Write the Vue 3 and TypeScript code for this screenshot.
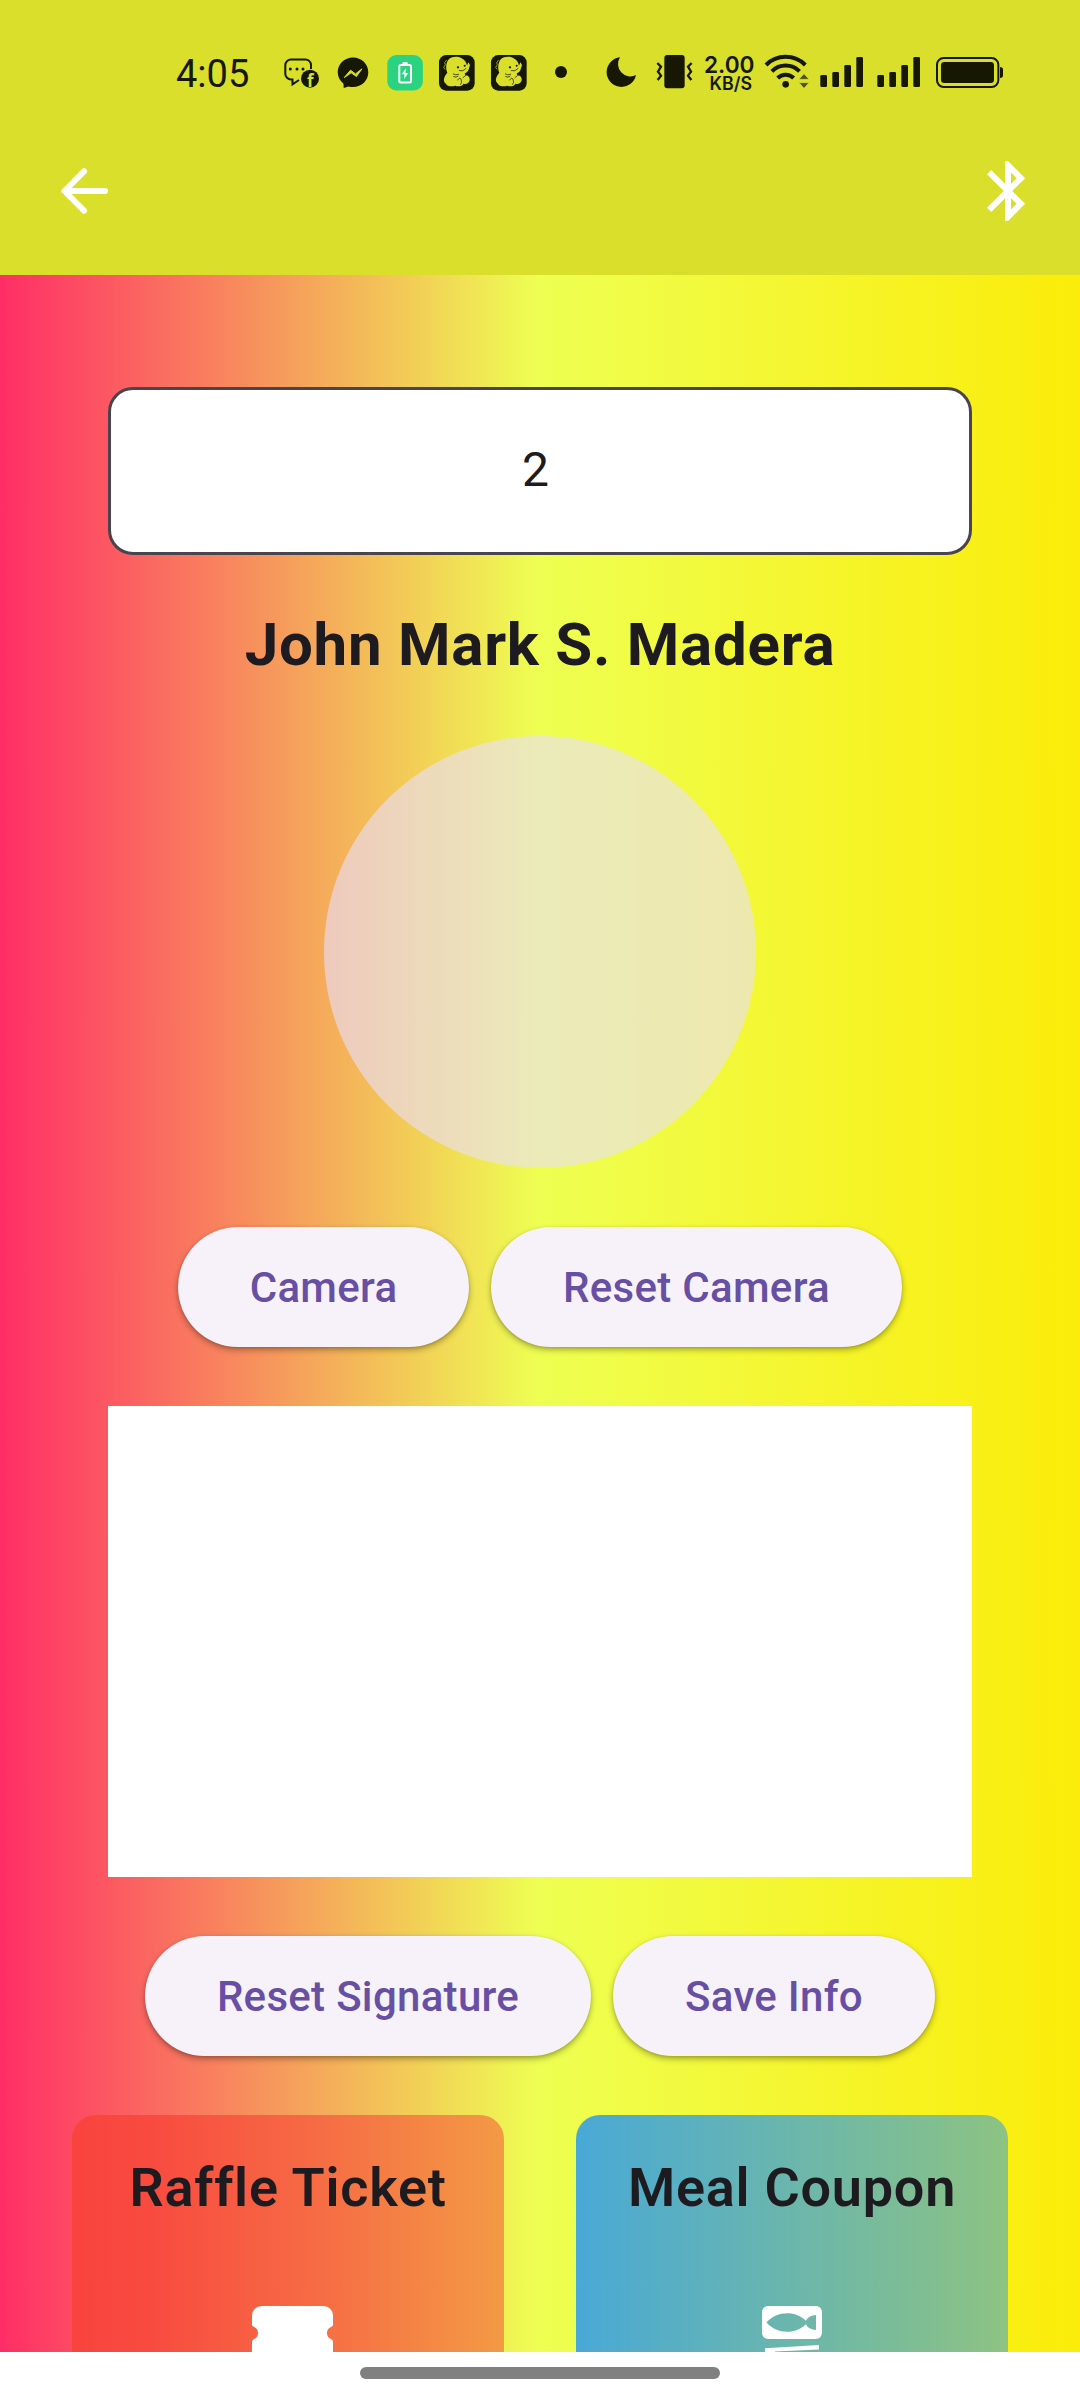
<script setup lang="ts">
import { ref } from 'vue'

interface Card {
  title: string
  kind: 'raffle' | 'meal'
}

const ticketNo = ref<string>('2')
const fullName = 'John Mark S. Madera'
const cards: Card[] = [
  { title: 'Raffle Ticket', kind: 'raffle' },
  { title: 'Meal Coupon', kind: 'meal' },
]
const dinoOffsets: number[] = [0, 156]
const signalOffsets: number[] = [0, 171]
</script>

<template>
  <div class="screen">
    <header class="top">
      <div class="status">
        <span class="clock">4:05</span>
        <svg class="notifications" width="300" height="50" viewBox="280 48 300 50">
          <!-- chat -->
          <path d="M291 59.500h14.500a5.500 5.500 0 0 1 5.500 5.500v4M299 80l-6.500 4.300V79.500H291a5.700 5.700 0 0 1-5.700-5.700V65.200a5.700 5.700 0 0 1 5.700-5.700" fill="none" stroke="#161804" stroke-width="2" />
          <circle cx="290.300" cy="69" r="1.500" /><circle cx="297" cy="69" r="1.500" /><circle cx="303" cy="69" r="1.500" />
          <circle cx="310" cy="78.700" r="9" />
          <text x="307" y="87" class="fb">f</text>
          <!-- messenger -->
          <path d="M353 57.500c8.700 0 15.300 6.400 15.300 14.800S361.700 87 353 87c-1.600 0-3.100-.2-4.500-.6L343.700 88l-.2-4.300c-3.500-2.800-5.800-6.700-5.800-11.400 0-8.400 6.600-14.800 15.300-14.800z" />
          <path d="M344.300 77.500l6.200-7.300 5 3.700 6.400-5-5.500 7.600-5.200-3.700z" fill="#d9df2b" stroke="#d9df2b" stroke-width="1" stroke-linejoin="round" />
          <!-- charging app -->
          <rect x="387.300" y="55" width="35.600" height="35.500" rx="9" fill="#2bd380" />
          <rect x="399.300" y="65" width="11.700" height="17.500" rx="1.500" fill="none" stroke="#fff" stroke-width="2" />
          <rect x="402.500" y="62" width="5.200" height="3" rx="1" fill="#fff" />
          <path d="M406 68.300l-4.400 6h3l-.6 4.700 4.400-6h-3z" fill="#fff" />
          <!-- dinosaur apps -->
          <g v-for="dx in dinoOffsets" :key="dx" :transform="`translate(${370 + dx / 3} 40) scale(.33333)`">
            <rect x="207" y="45" width="107" height="107" rx="22" />
            <path d="M232 98C226 86 228 66 237 57C246 49 263 48 274 54C284 59 290 68 291 77L295 67L300 75L295 91C291 98 287 99 284 101L287 107C295 105 300 113 299 121C297 130 288 134 280 131C277 139 264 141 256 137C244 141 231 139 228 131C222 128 220 120 223 113C225 106 229 102 232 98Z" fill="#d9df2b" />
            <g fill="none" stroke="#161804" stroke-width="2.200" stroke-linecap="round">
              <path d="M268 92Q279 96 288 86" />
              <path d="M250 102Q256 107 266 103M251 110Q258 114 264 109M263 120Q271 108 274 121Q276 128 272 133M279 113L286 107" />
            </g>
            <circle cx="264" cy="82" r="3.500" /><circle cx="284" cy="77" r="3" />
            <path d="M230 60l-6 8 2 6-5 8 4 6" fill="none" stroke="#d9df2b" stroke-width="2" />
          </g>
          <circle cx="561" cy="72" r="6" />
        </svg>
        <svg class="system" width="420" height="50" viewBox="600 48 420 50">
          <g transform="translate(590 40) scale(.33333)">
            <path d="M90 52A44.500 44.500 0 1 0 138 105A37 37 0 0 1 90 52z" />
            <rect x="223" y="45" width="61" height="100" rx="9" />
            <g fill="none" stroke="#161804" stroke-width="7">
              <path d="M202 69L213 80L204 95L213 107L203 120" />
              <path d="M305 69L294 80L303 95L294 107L304 120" />
            </g>
            <circle cx="587" cy="133" r="10" />
            <g fill="none" stroke="#161804" stroke-width="12">
              <path d="M528 75A83.500 83.500 0 0 1 646 75" />
              <path d="M545.500 94A58 58 0 0 1 628.500 94" />
              <path d="M563 114A34 34 0 0 1 611 114" />
            </g>
            <path d="M627 118L642 101L657 118zM627 128L642 145L657 128z" fill="#4d5012" stroke="#d9df2b" stroke-width="2" />
          </g>
          <text x="704" y="73" class="rate" textLength="50.500" lengthAdjust="spacingAndGlyphs">2.00</text>
          <text x="709.500" y="90" class="unit" textLength="42.500" lengthAdjust="spacingAndGlyphs">KB/S</text>
          <g transform="translate(800 40) scale(.33333)">
            <g v-for="dx in signalOffsets" :key="dx" :transform="`translate(${dx} 0)`">
              <rect x="61" y="105" width="20" height="36" rx="4" />
              <rect x="97" y="96" width="20" height="45" rx="4" />
              <rect x="133" y="75" width="20" height="66" rx="4" />
              <rect x="169" y="51" width="20" height="90" rx="4" />
            </g>
            <rect x="411" y="54" width="184" height="87" rx="20" fill="none" stroke="#161804" stroke-width="6" />
            <rect x="423" y="66" width="159" height="63" rx="10" />
            <path d="M600 81q9 0 9 8v17q0 8-9 8z" />
          </g>
        </svg>
      </div>
      <nav class="bar">
        <svg width="72" height="72" viewBox="0 0 72 72">
          <path d="M57 36H17M36 16.300L16.500 36L36 55.700" fill="none" stroke="#fff" stroke-width="6" stroke-linecap="round" stroke-linejoin="round" />
        </svg>
        <svg width="72" height="72" viewBox="0 0 24 24" fill="#fff">
          <path d="M17.710 7.710L12 2h-1v7.590L6.410 5 5 6.410 10.590 12 5 17.590 6.410 19 11 14.410V22h1l5.710-5.710-4.300-4.290 4.300-4.290zM13 5.830l1.880 1.880L13 9.590V5.830zm1.880 10.460L13 18.170v-3.760l1.880 1.880z" />
        </svg>
      </nav>
    </header>

    <main class="content">
      <div class="field"><span>{{ ticketNo }}</span></div>
      <h1 class="name"><span>{{ fullName }}</span></h1>
      <div class="avatar"></div>
      <div class="buttons">
        <button class="w-camera">Camera</button>
        <button class="w-reset-camera">Reset Camera</button>
      </div>
      <div class="pad"></div>
      <div class="buttons">
        <button class="w-reset-sign">Reset Signature</button>
        <button class="w-save">Save Info</button>
      </div>
      <div class="cards">
        <section v-for="card in cards" :key="card.kind" class="card" :class="card.kind">
          <h2>{{ card.title }}</h2>
          <svg v-if="card.kind === 'raffle'" width="82" height="46" viewBox="0 0 82 46" fill="#fff">
            <path d="M9.500 0h62a9.500 9.500 0 0 1 9.500 9.500v9.500q0 1-2 2a6.500 6.500 0 0 0 0 12q2 1 2 2.500V46H0V35.500q0-1.500 2-2.500a6.500 6.500 0 0 0 0-12q-2-1-2-2V9.500A9.500 9.500 0 0 1 9.500 0z" />
          </svg>
          <svg v-else width="60" height="46" viewBox="0 0 60 46" fill="#fff">
            <path fill-rule="evenodd" d="M6 0h48a6 6 0 0 1 6 6v21a6 6 0 0 1-6 6H6a6 6 0 0 1-6-6V6a6 6 0 0 1 6-6zM4.500 16.500C15 28.500 34 28.500 43.800 18.200Q46.500 23.500 54 24V9Q46.500 9.500 43.800 14.800C34 4.500 15 4.500 4.500 16.500z" />
            <path d="M3 42.200L57 39v4.600L13 45.500V46H3z" />
          </svg>
        </section>
      </div>
    </main>

    <footer class="home"><i></i></footer>
  </div>
</template>

<style>
body {
  margin: 0;
}
</style>

<style scoped>
.screen {
  width: 1080px;
  height: 2400px;
  display: flex;
  flex-direction: column;
  overflow: hidden;
  font-family: Roboto, 'Liberation Sans', sans-serif;
  color: #1d1b20;
}
svg {
  display: block;
  flex: none;
}
.top {
  height: 275px;
  flex: none;
  background: #d9df2b;
}
.status {
  height: 107px;
  padding-top: 48px;
  box-sizing: border-box;
  display: flex;
  color: #161804;
}
.clock {
  width: 104px;
  margin-left: 176px;
  height: 50px;
  font-size: 38px;
  line-height: 52px;
}
.notifications,
.system {
  fill: #161804;
}
.system {
  margin-left: 20px;
}
.fb {
  font: 700 17px 'Open Sans', sans-serif;
  fill: #d9df2b;
}
.rate {
  font: 600 23px Inter, sans-serif;
}
.unit {
  font: 600 18px Inter, sans-serif;
}
.bar {
  display: flex;
  justify-content: space-between;
  margin-top: 48px;
  padding: 0 36px 0 48px;
}
.content {
  flex: 1;
  min-height: 0;
  overflow: hidden;
  box-sizing: border-box;
  padding-top: 112px;
  display: flex;
  flex-direction: column;
  align-items: center;
  background: linear-gradient(90deg, #ff2e66 0%, #eeff52 50%, #fbec09 100%);
}
.content > * {
  flex: none;
}
.field {
  width: 864px;
  height: 168px;
  box-sizing: border-box;
  border: 3px solid #49454f;
  border-radius: 25px;
  background: #fff;
  display: flex;
  align-items: center;
  justify-content: center;
  font-size: 48px;
}
.field span {
  margin: -4px 9px 0 0;
}
.name {
  margin: 0;
  height: 181px;
  display: flex;
  align-items: center;
  font-size: 60px;
  font-weight: 700;
  letter-spacing: 0.75px;
  white-space: nowrap;
}
.name span {
  margin-top: -2px;
}
.avatar {
  width: 432px;
  height: 432px;
  border-radius: 50%;
  background: rgba(234, 221, 255, 0.6);
}
.buttons {
  display: flex;
  gap: 22px;
  margin: 59px 0;
}
button {
  height: 120px;
  padding: 1px 0 0;
  border: 0;
  border-radius: 60px;
  background: #f7f2fa;
  color: #6750a4;
  font: 500 42px/119px Roboto, sans-serif;
  letter-spacing: 0.3px;
  box-shadow: 0 3px 6px rgba(0, 0, 0, 0.3), 0 1px 3px rgba(0, 0, 0, 0.12);
}
.w-camera {
  width: 291px;
}
.w-reset-camera {
  width: 411px;
}
.w-reset-sign {
  width: 446px;
}
.w-save {
  width: 322px;
}
.pad {
  width: 864px;
  height: 471px;
  background: #fff;
}
.cards {
  display: flex;
  gap: 72px;
}
.card {
  width: 432px;
  height: 432px;
  border-radius: 24px;
  display: flex;
  flex-direction: column;
  align-items: center;
}
.raffle {
  background: linear-gradient(90deg, #f9433e, #f84c40 20%, #f66a44 55%, #f39a45);
}
.meal {
  background: linear-gradient(90deg, #49a9d6, #8dc382);
}
.card h2 {
  margin: 41px 0 86px;
  height: 64px;
  line-height: 64px;
  font-size: 54px;
  font-weight: 600;
  letter-spacing: 0.75px;
  white-space: nowrap;
}
.raffle svg {
  margin-left: 10px;
}
.home {
  height: 48px;
  flex: none;
  background: #fff;
  display: flex;
  justify-content: center;
}
.home i {
  width: 360px;
  height: 12px;
  margin-top: 15px;
  border-radius: 6px;
  background: #808080;
}
</style>
